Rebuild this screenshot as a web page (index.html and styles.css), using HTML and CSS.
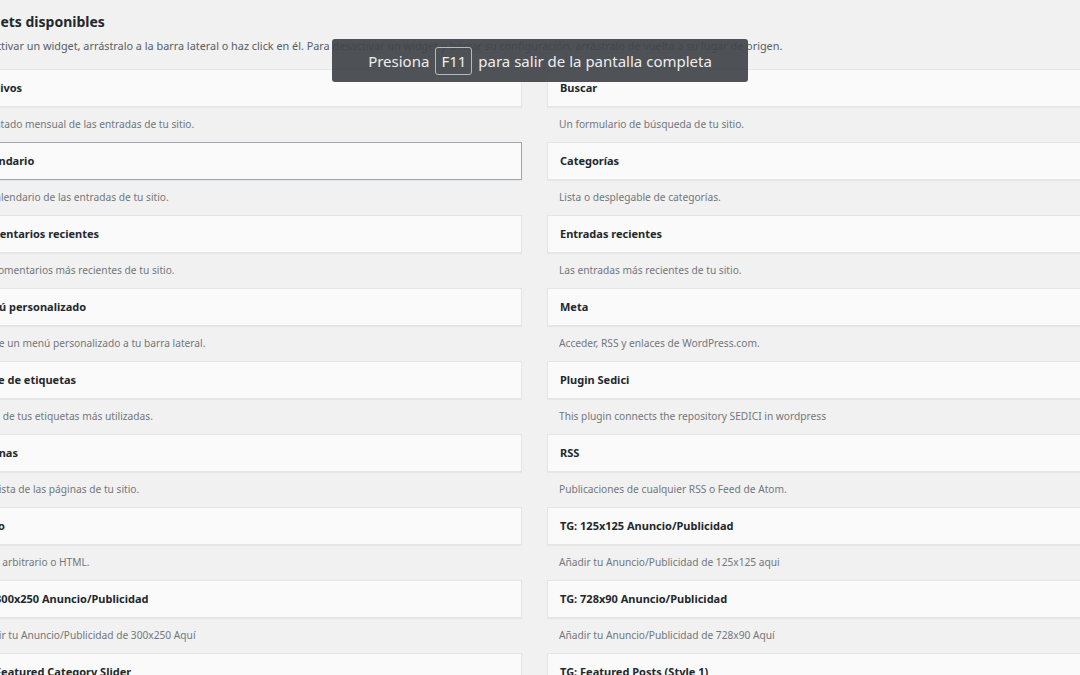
FILE: index.html
```html
<!DOCTYPE html>
<html lang="es">
<head>
<meta charset="utf-8">
<title>Widgets</title>
<link rel="stylesheet" href="styles.css">
</head>
<body>
<div class="page">
  <div class="head">
    <h2 class="title">Widgets disponibles</h2>
    <p class="intro">Para activar un widget, arrástralo a la barra lateral o haz click en él. Para desactivar un widget y borrar su configuración, arrástralo de vuelta a su lugar de origen.</p>
  </div>
  <div class="grid">
    <div class="widget"><div class="card"><h3>Archivos</h3></div><p class="desc">Un listado mensual de las entradas de tu sitio.</p></div>
    <div class="widget"><div class="card"><h3>Buscar</h3></div><p class="desc">Un formulario de búsqueda de tu sitio.</p></div>
    <div class="widget"><div class="card hover"><h3>Calendario</h3></div><p class="desc">Un calendario de las entradas de tu sitio.</p></div>
    <div class="widget"><div class="card"><h3>Categorías</h3></div><p class="desc">Lista o desplegable de categorías.</p></div>
    <div class="widget"><div class="card"><h3>Comentarios recientes</h3></div><p class="desc">Los comentarios más recientes de tu sitio.</p></div>
    <div class="widget"><div class="card"><h3>Entradas recientes</h3></div><p class="desc">Las entradas más recientes de tu sitio.</p></div>
    <div class="widget"><div class="card"><h3>Menú personalizado</h3></div><p class="desc">Añade un menú personalizado a tu barra lateral.</p></div>
    <div class="widget"><div class="card"><h3>Meta</h3></div><p class="desc">Acceder, RSS y enlaces de WordPress.com.</p></div>
    <div class="widget"><div class="card"><h3>Nube de etiquetas</h3></div><p class="desc">Nube de tus etiquetas más utilizadas.</p></div>
    <div class="widget"><div class="card"><h3>Plugin Sedici</h3></div><p class="desc">This plugin connects the repository SEDICI in wordpress</p></div>
    <div class="widget"><div class="card"><h3>Páginas</h3></div><p class="desc">Una lista de las páginas de tu sitio.</p></div>
    <div class="widget"><div class="card"><h3>RSS</h3></div><p class="desc">Publicaciones de cualquier RSS o Feed de Atom.</p></div>
    <div class="widget"><div class="card"><h3>Texto</h3></div><p class="desc">Texto arbitrario o HTML.</p></div>
    <div class="widget"><div class="card"><h3>TG: 125x125 Anuncio/Publicidad</h3></div><p class="desc">Añadir tu Anuncio/Publicidad de 125x125 aqui</p></div>
    <div class="widget"><div class="card"><h3>TG: 300x250 Anuncio/Publicidad</h3></div><p class="desc">Añadir tu Anuncio/Publicidad de 300x250 Aquí</p></div>
    <div class="widget"><div class="card"><h3>TG: 728x90 Anuncio/Publicidad</h3></div><p class="desc">Añadir tu Anuncio/Publicidad de 728x90 Aquí</p></div>
    <div class="widget"><div class="card"><h3>TG: Featured Category Slider</h3></div><p class="desc">Muestra las entradas de una categoría en un slider.</p></div>
    <div class="widget"><div class="card"><h3>TG: Featured Posts (Style 1)</h3></div><p class="desc">Muestra las entradas destacadas.</p></div>
  </div>
</div>
<div class="fs-notice">Presiona <span class="key">F11</span> para salir de la pantalla completa</div>
</body>
</html>
```
FILE: styles.css
```css
html, body {
  margin: 0;
  padding: 0;
  background: #f1f1f1;
  overflow: hidden;
  height: 675px;
}
body {
  font-family: "Noto Sans", "Open Sans", sans-serif;
  color: #23282d;
}
.page {
  width: 1200px;
  padding-top: 12px;
}
.head {
  margin-left: -35px;
}
.title {
  font-size: 14px;
  font-weight: 700;
  margin: 0;
  line-height: 20px;
  color: #23282d;
}
.intro {
  margin: 4px 0 0 -1px;
  font-size: 10.85px;
  line-height: 20px;
  color: #555d66;
  white-space: nowrap;
}
.grid {
  margin-top: 13px;
  margin-left: -38px;
  display: grid;
  grid-template-columns: 560px 560px;
  column-gap: 25px;
}
.widget {
  height: 73px;
}
.card {
  height: 38px;
  box-sizing: border-box;
  background: #fafafa;
  border: 1px solid #e5e5e5;
  box-shadow: 0 1px 1px rgba(0,0,0,0.04);
  display: flex;
  align-items: center;
  padding: 0 12px 2px;
}
.card.hover {
  border-color: #a0a5aa;
}
.card h3 {
  margin: 0;
  font-size: 11px;
  font-weight: 700;
  color: #23282d;
  white-space: nowrap;
}
.desc {
  margin: 0;
  padding: 9px 12px 0;
  font-size: 10.2px;
  line-height: 16px;
  color: #72777c;
  white-space: nowrap;
}
.fs-notice {
  position: absolute;
  left: 332px;
  top: 39px;
  width: 416px;
  height: 43px;
  box-sizing: border-box;
  border-radius: 3px;
  background: rgba(66, 69, 74, 0.93);
  color: #eeeeee;
  font-size: 15px;
  display: flex;
  align-items: center;
  justify-content: center;
  gap: 6px;
}
.key {
  display: inline-block;
  border: 1px solid #b9b9b9;
  border-radius: 3px;
  padding: 3px 5px;
  line-height: 20px;
}
```
